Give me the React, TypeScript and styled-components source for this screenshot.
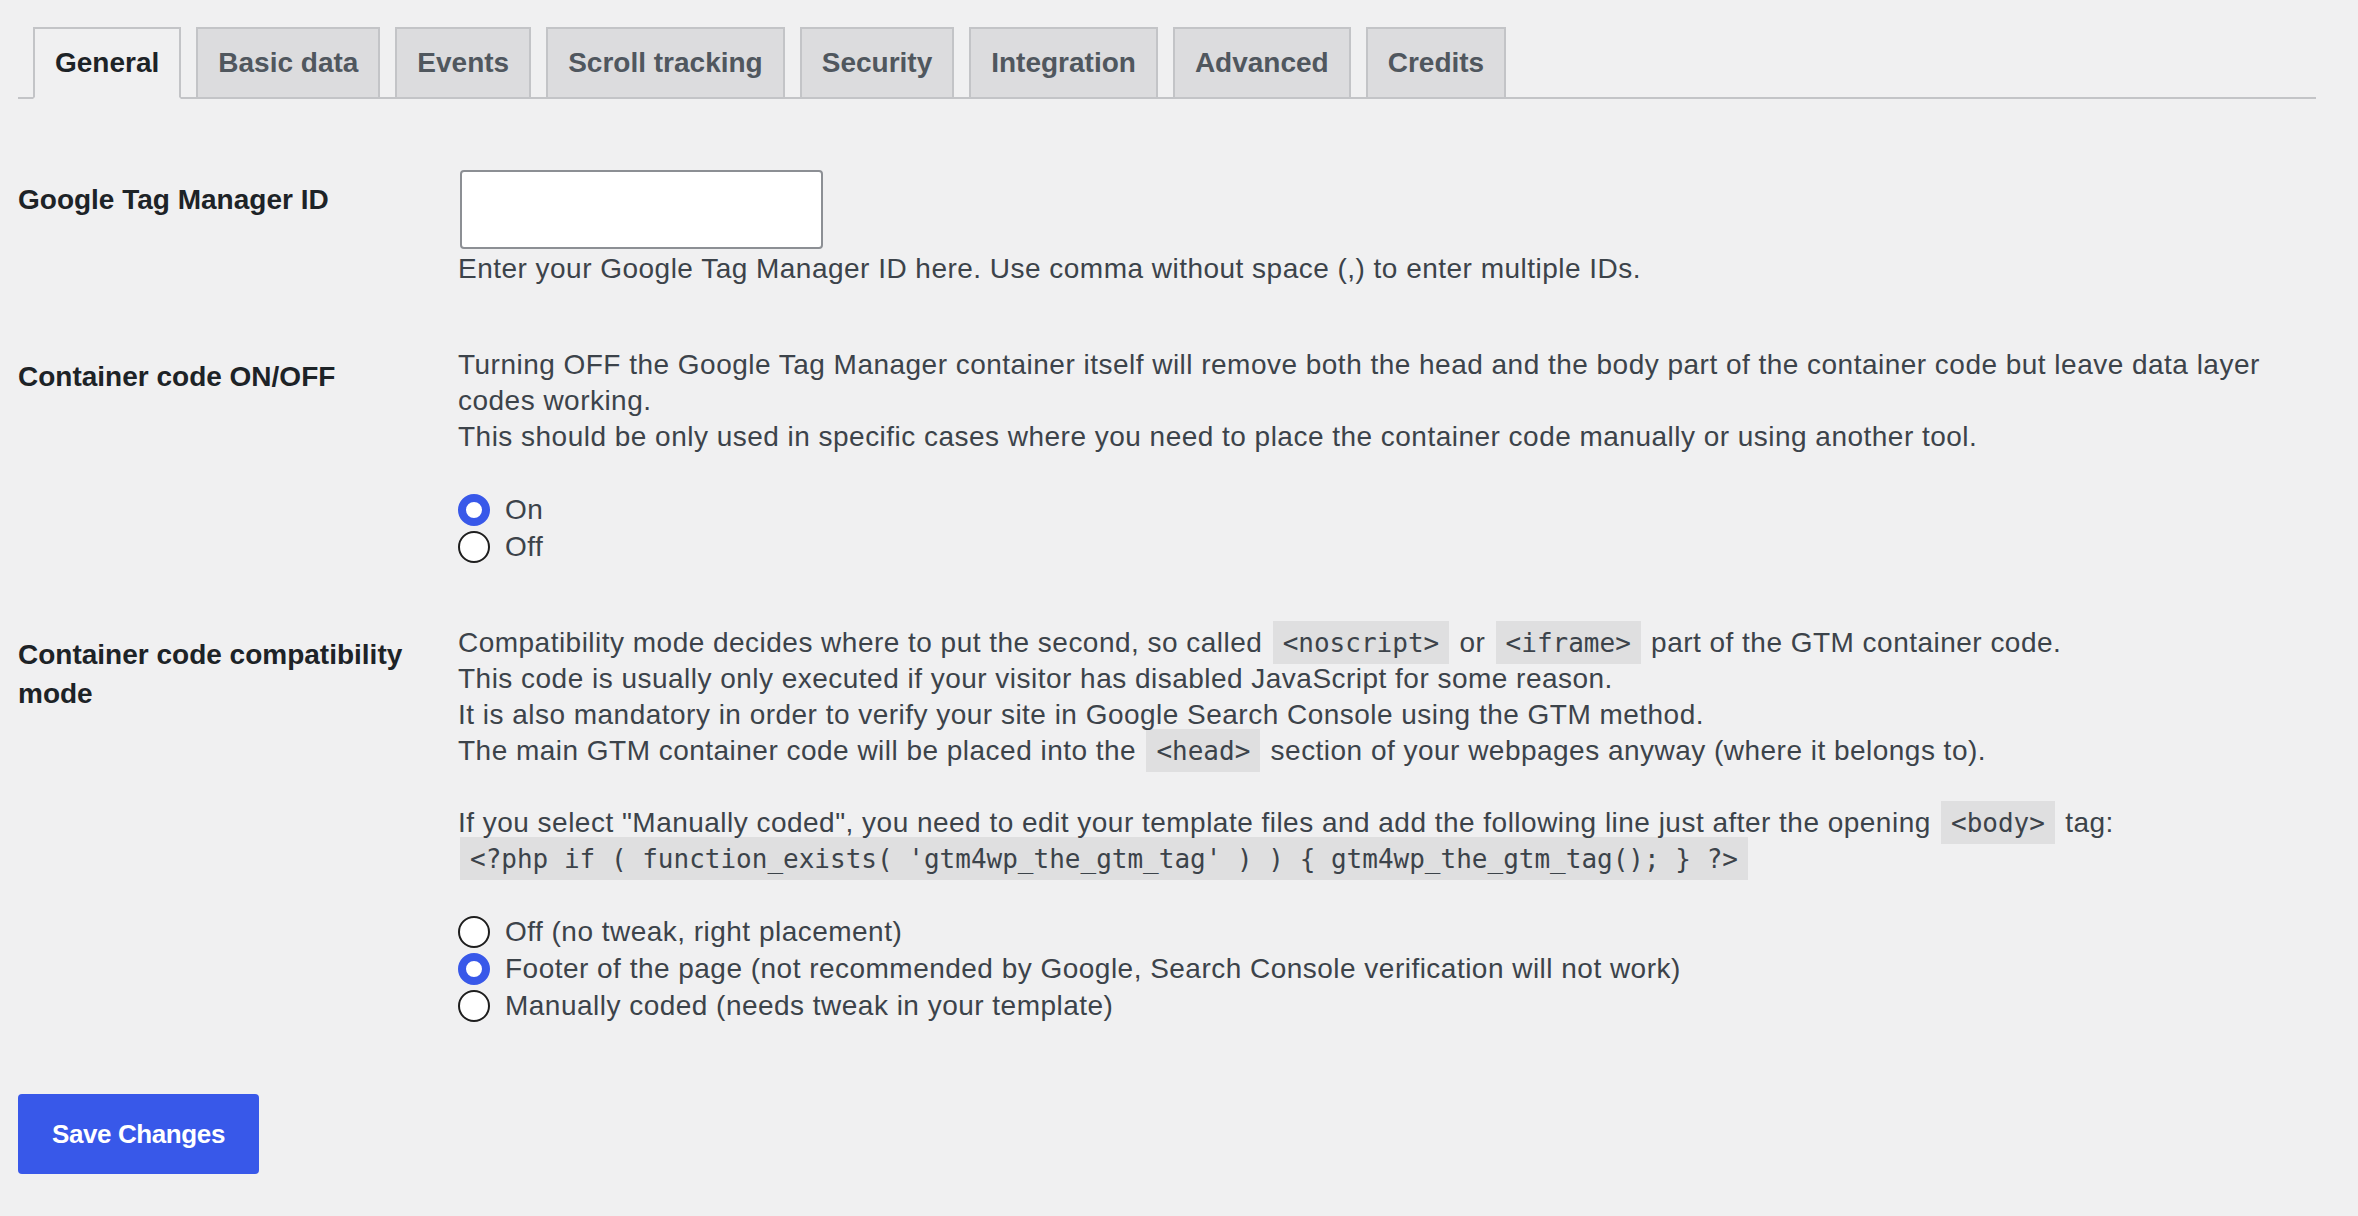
import React from "react";
import styled, { createGlobalStyle } from "styled-components";

const GlobalStyle = createGlobalStyle`
  html, body {
    margin: 0;
    padding: 0;
    background: #f0f0f1;
  }
  body {
    font-family: "Liberation Sans", Arial, sans-serif;
    -webkit-font-smoothing: antialiased;
  }
`;

const Page = styled.div`
  box-sizing: border-box;
  min-height: 1216px;
  padding: 27px 42px 0 18px;
`;

const TabBar = styled.nav`
  display: flex;
  border-bottom: 2px solid #c3c4c7;
`;

const Tab = styled.span<{ $active?: boolean }>`
  margin-left: 15px;
  margin-bottom: -2px;
  padding: 10px 20px;
  border: 2px solid #c3c4c7;
  border-bottom: 2px solid ${(p) => (p.$active ? "#f0f0f1" : "#c3c4c7")};
  background: ${(p) => (p.$active ? "#f0f0f1" : "#dcdcde")};
  color: ${(p) => (p.$active ? "#1d2327" : "#50575e")};
  font-size: 28px;
  font-weight: 700;
  line-height: 48px;
  white-space: nowrap;
`;

const Form = styled.div`
  margin-top: 41px;
`;

const Row = styled.div`
  display: grid;
  grid-template-columns: 420px 1fr;
`;

const Th = styled.div`
  padding: 40px 20px 40px 0;
  font-size: 28px;
  font-weight: 700;
  line-height: 39px;
  color: #1d2327;
`;

const Td = styled.div`
  padding: 30px 20px;
  font-size: 28px;
  line-height: 36px;
  letter-spacing: 0.48px;
  color: #3c434a;
`;

const TextInput = styled.input`
  display: block;
  box-sizing: border-box;
  width: 363px;
  height: 79px;
  margin: 0 0 2px 2px;
  border: 2px solid #8c8f94;
  border-radius: 4px;
  background: #fff;
  font-size: 28px;
  padding: 0 16px;
`;

const Para = styled.p<{ $gap?: boolean }>`
  margin: ${(p) => (p.$gap ? "36px 0 0" : "0")};
`;

const Code = styled.code`
  font-family: "DejaVu Sans Mono", "Liberation Mono", monospace;
  font-size: 26px;
  line-height: 1;
  letter-spacing: 0;
  padding: 7px 10px 6px;
  margin: 0 2px;
  background: rgba(0, 0, 0, 0.07);
`;

const RadioGroup = styled.div`
  margin-top: 36px;
  display: flex;
  flex-direction: column;
`;

const RadioLabel = styled.label`
  display: flex;
  align-items: center;
  gap: 15px;
  height: 37px;
`;

const RadioDot = styled.span<{ $checked?: boolean }>`
  flex: none;
  box-sizing: border-box;
  width: 32px;
  height: 32px;
  border-radius: 50%;
  background: #fff;
  border: ${(p) => (p.$checked ? "8px solid #3858e9" : "2px solid #1e1e1e")};
`;

const Submit = styled.div`
  padding-top: 40px;
`;

const PrimaryButton = styled.button`
  height: 80px;
  padding: 0 34px;
  border: none;
  border-radius: 4px;
  background: #3858e9;
  color: #fff;
  font-family: "Liberation Sans", Arial, sans-serif;
  font-size: 26px;
  font-weight: 700;
  letter-spacing: -0.4px;
`;

const tabs = [
  "General",
  "Basic data",
  "Events",
  "Scroll tracking",
  "Security",
  "Integration",
  "Advanced",
  "Credits",
];

type Opt = { label: string; checked?: boolean };

const Radios: React.FC<{ options: Opt[] }> = ({ options }) => (
  <RadioGroup>
    {options.map((o) => (
      <RadioLabel key={o.label}>
        <RadioDot $checked={o.checked} />
        {o.label}
      </RadioLabel>
    ))}
  </RadioGroup>
);

export default function App() {
  return (
    <>
      <GlobalStyle />
      <Page>
        <TabBar>
          {tabs.map((t, i) => (
            <Tab key={t} $active={i === 0}>
              {t}
            </Tab>
          ))}
        </TabBar>

        <Form>
          <Row>
            <Th>Google Tag Manager ID</Th>
            <Td>
              <TextInput type="text" />
              <Para>
                Enter your Google Tag Manager ID here. Use comma without space (,) to enter
                multiple IDs.
              </Para>
            </Td>
          </Row>

          <Row>
            <Th>Container code ON/OFF</Th>
            <Td>
              <Para>
                Turning OFF the Google Tag Manager container itself will remove both the head
                and the body part of the container code but leave data layer codes working.
                <br />
                This should be only used in specific cases where you need to place the
                container code manually or using another tool.
              </Para>
              <Radios options={[{ label: "On", checked: true }, { label: "Off" }]} />
            </Td>
          </Row>

          <Row>
            <Th>Container code compatibility mode</Th>
            <Td>
              <Para>
                Compatibility mode decides where to put the second, so called{" "}
                <Code>&lt;noscript&gt;</Code> or <Code>&lt;iframe&gt;</Code> part of the GTM
                container code.
                <br />
                This code is usually only executed if your visitor has disabled JavaScript for
                some reason.
                <br />
                It is also mandatory in order to verify your site in Google Search Console using
                the GTM method.
                <br />
                The main GTM container code will be placed into the <Code>&lt;head&gt;</Code>{" "}
                section of your webpages anyway (where it belongs to).
              </Para>
              <Para $gap>
                If you select "Manually coded", you need to edit your template files and add the
                following line just after the opening <Code>&lt;body&gt;</Code> tag:
                <br />
                <Code>
                  &lt;?php if ( function_exists( 'gtm4wp_the_gtm_tag' ) ) {"{"}{" "}
                  gtm4wp_the_gtm_tag(); {"}"} ?&gt;
                </Code>
              </Para>
              <Radios
                options={[
                  { label: "Off (no tweak, right placement)" },
                  {
                    label:
                      "Footer of the page (not recommended by Google, Search Console verification will not work)",
                    checked: true,
                  },
                  { label: "Manually coded (needs tweak in your template)" },
                ]}
              />
            </Td>
          </Row>
        </Form>

        <Submit>
          <PrimaryButton type="button">Save Changes</PrimaryButton>
        </Submit>
      </Page>
    </>
  );
}
